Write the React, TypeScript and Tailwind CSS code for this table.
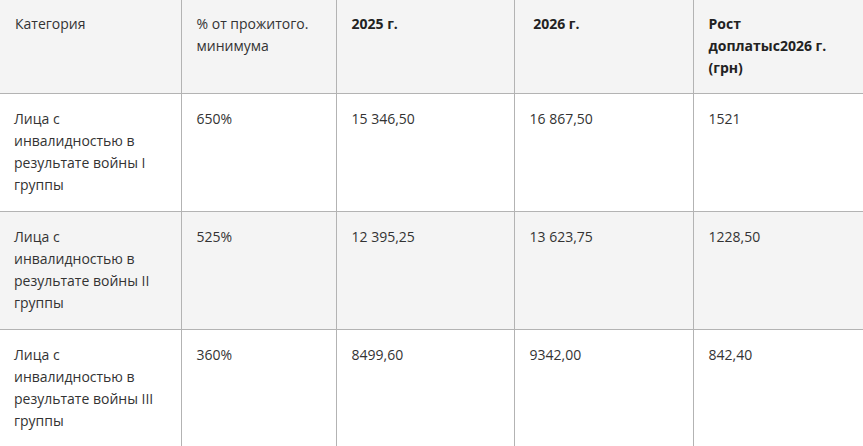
const HEAD = ["Категория", "% от прожитого. минимума", "2025 г.", "\u00a02026 г.", "Рост доплатыс2026 г. (грн)"];

const ROWS = [
  ["Лица с инвалидностью в результате войны I группы", "650%", "15 346,50", "16 867,50", "1521"],
  ["Лица с инвалидностью в результате войны II группы", "525%", "12 395,25", "13 623,75", "1228,50"],
  ["Лица с инвалидностью в результате войны III группы", "360%", "8499,60", "9342,00", "842,40"],
];

const WIDTHS = ["w-[181px]", "w-[155px]", "w-[178px]", "w-[179px]", ""];

export default function App() {
  return (
    <div className="h-[446px] w-[863px] overflow-hidden bg-white font-['Open_Sans',sans-serif] text-[14px] leading-[22px] text-[#333]">
      <table className="w-full table-fixed border-collapse">
        <colgroup>
          {WIDTHS.map((w, i) => (
            <col key={i} className={w} />
          ))}
        </colgroup>
        <thead>
          <tr className="bg-[#f4f4f4]">
            {HEAD.map((h, i) => (
              <th
                key={i}
                className={`border-b border-[#b3b3b3] pl-[15px] pt-[13px] pb-[14px] text-left align-top ${i < 4 ? "border-r pr-[15px]" : "pr-[30px]"} ${i >= 2 ? "font-bold text-[#222]" : "font-normal"}`}
              >
                {h}
              </th>
            ))}
          </tr>
        </thead>
        <tbody>
          {ROWS.map((row, ri) => (
            <tr key={ri} className={ri % 2 === 1 ? "bg-[#f4f4f4]" : "bg-white"}>
              {row.map((c, ci) => (
                <td
                  key={ci}
                  className={`border-b border-[#b3b3b3] px-[15px] pt-[14px] pb-[15px] align-top ${ci < 4 ? "border-r" : ""} ${ci === 0 ? "pl-[14px]" : ""}`}
                >
                  {c}
                </td>
              ))}
            </tr>
          ))}
        </tbody>
      </table>
    </div>
  );
}
